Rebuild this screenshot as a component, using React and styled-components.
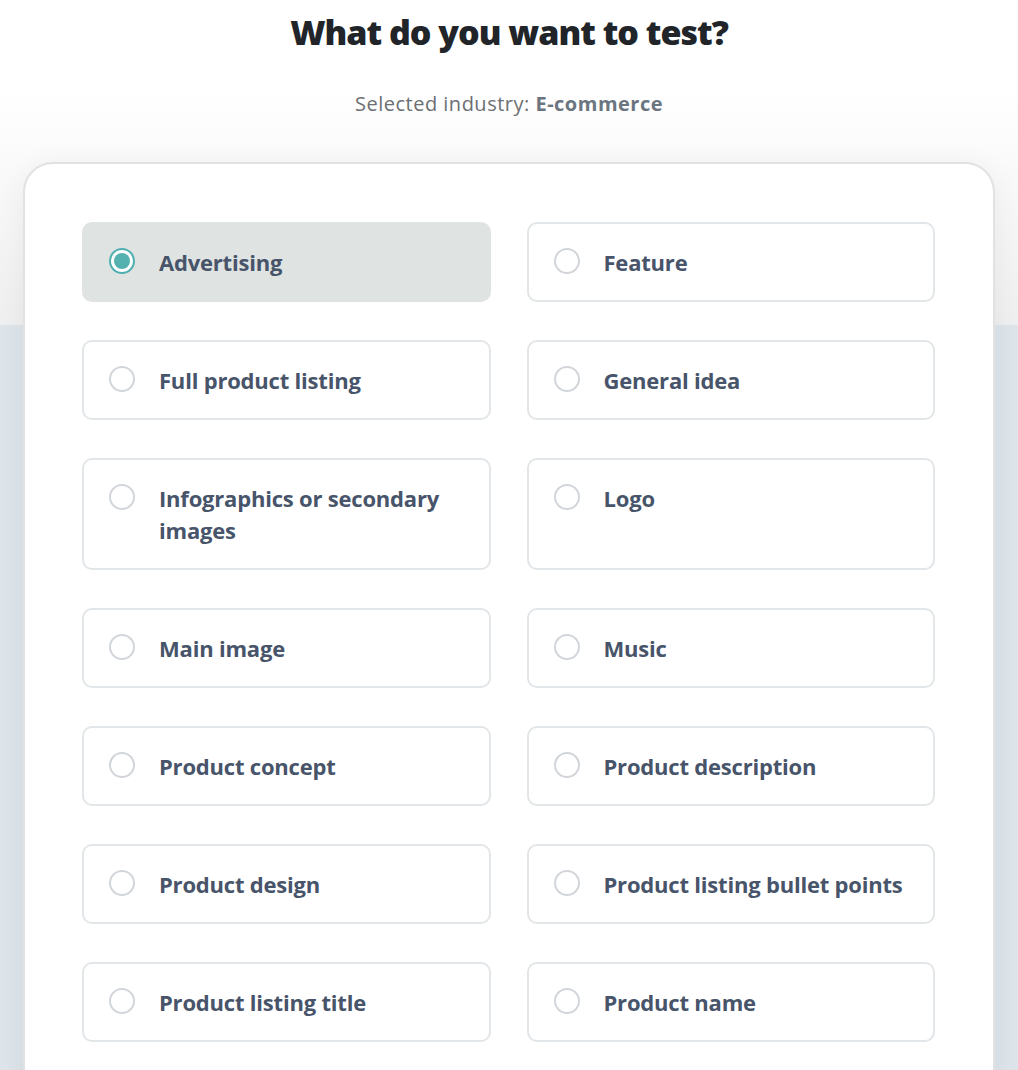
import React, { useState } from 'react'
import styled, { createGlobalStyle } from 'styled-components'

const GlobalStyle = createGlobalStyle`
  body {
    margin: 0;
    font-family: "Open Sans", Lato, sans-serif;
    background: linear-gradient(to bottom, #ffffff 0, #ffffff 90px, #efefef 325px, #dde4ea 325px, #dde4ea 100%);
    min-height: 100vh;
  }
`

const Page = styled.div`
  display: flex;
  flex-direction: column;
  align-items: center;
  padding: 10px 23px 0;
`

const Title = styled.h1`
  margin: 0;
  font-size: 34px;
  line-height: 44px;
  font-weight: 800;
  color: #212529;
  letter-spacing: -1px;
`

const Subtitle = styled.p`
  margin: 38px 0 0;
  font-size: 20px;
  line-height: 24px;
  color: #6c6f73;
  letter-spacing: 0.5px;

  b {
    color: #6b7580;
    font-weight: 700;
  }
`

const Card = styled.div`
  margin-top: 46px;
  width: 100%;
  box-sizing: border-box;
  background: #fff;
  border: 2px solid #e2e2e2;
  border-radius: 30px;
  box-shadow: 0 4px 30px rgba(0, 0, 0, 0.06);
  padding: 58px 58px 80px 57px;
`

const Grid = styled.div`
  display: grid;
  grid-template-columns: 1fr 1fr;
  column-gap: 36px;
  row-gap: 38px;
`

const Option = styled.label`
  display: flex;
  align-items: flex-start;
  gap: 24px;
  padding: 22px 20px 22px 25px;
  border: 2px solid ${({ $selected }) => ($selected ? '#dfe3e2' : '#e3e6e8')};
  background: ${({ $selected }) => ($selected ? '#dfe3e2' : '#fff')};
  border-radius: 10px;
  cursor: pointer;
`

const Radio = styled.span`
  flex: none;
  width: 26px;
  height: 26px;
  margin-top: 2px;
  box-sizing: border-box;
  border-radius: 50%;
  border: 2px solid ${({ $checked }) => ($checked ? '#4fafb0' : '#d2d6da')};
  background: #fff;
  display: flex;
  align-items: center;
  justify-content: center;

  &::after {
    content: '';
    width: 16px;
    height: 16px;
    border-radius: 50%;
    background: #55b0b0;
    display: ${({ $checked }) => ($checked ? 'block' : 'none')};
  }
`

const Label = styled.span`
  font-size: 22px;
  line-height: 32px;
  font-weight: 700;
  color: #47546a;
  letter-spacing: -0.2px;
`

const options = [
  'Advertising',
  'Feature',
  'Full product listing',
  'General idea',
  'Infographics or secondary images',
  'Logo',
  'Main image',
  'Music',
  'Product concept',
  'Product description',
  'Product design',
  'Product listing bullet points',
  'Product listing title',
  'Product name'
]

const App = () => {
  const [selected, setSelected] = useState('Advertising')

  return (
    <>
      <GlobalStyle />
      <Page>
        <Title>What do you want to test?</Title>
        <Subtitle>
          Selected industry: <b>E-commerce</b>
        </Subtitle>
        <Card>
          <Grid>
            {options.map((title) => (
              <Option
                key={title}
                $selected={selected === title}
                onClick={() => setSelected(title)}>
                <Radio $checked={selected === title} />
                <Label>{title}</Label>
              </Option>
            ))}
          </Grid>
        </Card>
      </Page>
    </>
  )
}

export default App
